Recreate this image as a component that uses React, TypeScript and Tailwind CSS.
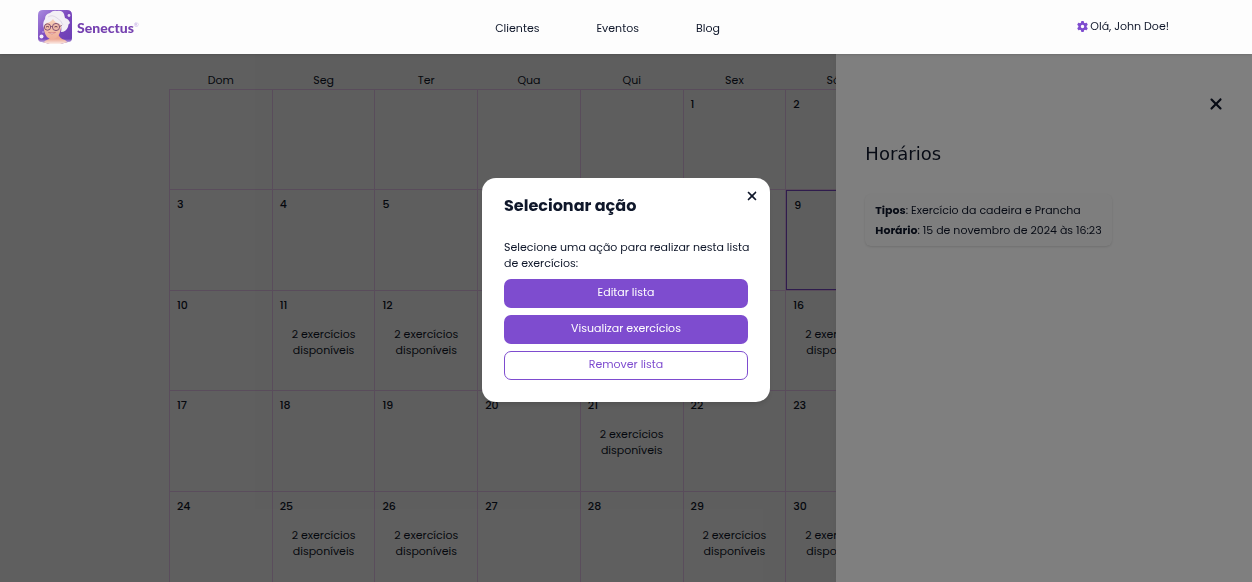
import React from "react";
import { FaGear, FaXmark } from "react-icons/fa6";

const weekdays = ["Dom", "Seg", "Ter", "Qua", "Qui", "Sex", "Sáb"];
const busyDays = [11, 12, 16, 21, 25, 26, 29, 30];
const today = 9;
const firstWeekday = 5;
const weeks = Array.from({ length: 5 }, (_, week) =>
  Array.from({ length: 7 }, (_, day) => week * 7 + day - firstWeekday + 1),
);

function Logo() {
  return (
    <a href="#inicio" aria-label="Senectus" className="flex items-center gap-1">
      <svg viewBox="0 0 34 34" className="size-[34px]" aria-hidden="true">
        <defs>
          <linearGradient id="tile" x1="0" y1="0" x2="1" y2="1">
            <stop offset="0" stopColor="#a98be0" />
            <stop offset="0.5" stopColor="#7a48bd" />
            <stop offset="1" stopColor="#6a3db4" />
          </linearGradient>
          <linearGradient id="skin" x1="0" y1="0" x2="0" y2="1">
            <stop offset="0" stopColor="#f8d3bd" />
            <stop offset="1" stopColor="#efae98" />
          </linearGradient>
          <linearGradient id="fade" x1="0" y1="0" x2="0" y2="1">
            <stop offset="0.85" stopColor="#fff" stopOpacity="0" />
            <stop offset="1" stopColor="#fff" stopOpacity="0.8" />
          </linearGradient>
          <clipPath id="tileClip">
            <path d="M5 0H29Q34 0 34 5V28Q34 32 30 32L26 33Q17 36 8 33L4 32Q0 32 0 28V5Q0 0 5 0Z" />
          </clipPath>
        </defs>
        <g clipPath="url(#tileClip)">
          <rect width="34" height="34" fill="url(#tile)" />
          <path d="M4 34Q7 30 11 29L20 24Q22 29 27 30Q29 31 30 34Z" fill="#eda893" />
          <path d="M6 14Q8 7 16 8Q24 9 23 18Q22 25 18 28Q13 31 9 27Q5 22 6 14Z" fill="url(#skin)" />
          <path d="M6 18Q4 13 7 9Q7 4 12 3Q15 0 19 1Q24 0 26 4L27 8Q31 9 32 13Q30 14 30 17Q28 22 23 22Q24 17 22 14Q17 13 15 9Q12 13 8 13Q7 15 6 18Z" fill="#f2eff5" />
          <path d="M10 7Q14 4 19 8Q23 10 25 15" fill="none" stroke="#d9d0df" strokeWidth="0.8" />
          <circle cx="9.500" cy="17" r="3.200" fill="#efb9a8" stroke="#7a4a70" strokeWidth="0.9" />
          <circle cx="18" cy="17" r="3.600" fill="#efb9a8" stroke="#7a4a70" strokeWidth="0.9" />
          <path d="M12.700 16.500H14.400M21.600 16.500L24 15.500" stroke="#7a4a70" strokeWidth="0.8" />
          <path d="M8 17Q9.500 16 11 17M16.500 17Q18 16 19.500 17" fill="none" stroke="#5a3046" strokeWidth="0.9" />
          <path d="M10.500 22.500Q14 25.500 17.500 22.500Q14 23 10.500 22.500Z" fill="#fff" stroke="#c9676a" strokeWidth="0.6" />
          <rect width="34" height="34" fill="url(#fade)" />
        </g>
        <circle cx="3.500" cy="26.500" r="2" fill="#f5effc" />
        <circle cx="31" cy="5.500" r="1.400" fill="#e3d7f5" />
        <circle cx="5" cy="22" r="0.800" fill="#cbb4ec" />
      </svg>
      <span className="flex items-start pl-px pt-[2px] font-[Lato,sans-serif] text-[14px] leading-5 font-black text-[#7540b0]">
        Senectus
        <span className="pt-1 text-[6px] leading-none font-normal text-[#c3a9e6]">®</span>
      </span>
    </a>
  );
}

function Calendar() {
  return (
    <table className="h-[523px] w-[720px] table-fixed border-collapse">
      <thead>
        <tr>
          {weekdays.map((name) => (
            <th key={name} scope="col" className="h-5 p-0 pb-px align-bottom font-normal">
              {name}
            </th>
          ))}
        </tr>
      </thead>
      <tbody>
        {weeks.map((week, row) => (
          <tr key={row} className="h-[100px]">
            {week.map((day, column) => (
              <td
                key={column}
                className={
                  day === today
                    ? "border border-[#efccf5] p-0 align-top outline-1 -outline-offset-1 outline-[#7e4ccf]"
                    : "border border-[#efccf5] p-0 align-top"
                }
              >
                {day > 0 && (
                  <div className={day === today ? "px-2 pt-[7px]" : "px-[7px] pt-[6px]"}>
                    <p className="font-medium">{day}</p>
                    {busyDays.includes(day) && (
                      <p className="pt-[13px] text-center">2 exercícios disponíveis</p>
                    )}
                  </div>
                )}
              </td>
            ))}
          </tr>
        ))}
      </tbody>
    </table>
  );
}

export default function App() {
  return (
    <div className="h-screen overflow-hidden bg-[#fdfdfd] font-[Poppins,Inter,sans-serif] text-[11px] leading-4 text-[#0f172a]">
      <header className="relative z-30 grid h-[54px] grid-cols-[1fr_auto_1fr] items-center bg-[#fdfdfd] pr-[83px] pl-[38px] shadow-sm">
        <Logo />
        <nav className="flex gap-[57px] pt-px pl-2">
          <a href="#clientes">Clientes</a>
          <a href="#eventos">Eventos</a>
          <a href="#blog">Blog</a>
        </nav>
        <a href="#conta" className="flex items-center gap-[2px] justify-self-end pb-[2px]">
          <FaGear className="size-[11px] text-[#7e4ccf]" aria-hidden="true" />
          Olá, John Doe!
        </a>
      </header>

      <main className="pt-[15px] pl-[13.5%]">
        <Calendar />
      </main>

      <div className="fixed inset-0 bg-black/25" />

      <aside className="fixed inset-y-0 right-0 z-10 w-[33.2%] bg-white pt-[95px] pr-[27px] pl-[29px] shadow-lg">
        <div className="flex justify-end">
          <button type="button" aria-label="Fechar horários">
            <FaXmark className="size-[18px]" />
          </button>
        </div>
        <h2 className="pt-[27px] font-['DejaVu_Sans',sans-serif] text-[18px] leading-7">Horários</h2>
        <div className="mt-[26px] flex w-fit flex-col gap-1 rounded-md bg-[#fdfdfd] px-[10px] py-2 shadow-sm">
          <p>
            <strong>Tipos</strong>: Exercício da cadeira e Prancha
          </p>
          <p>
            <strong>Horário</strong>: 15 de novembro de 2024 às 16:23
          </p>
        </div>
      </aside>

      <div className="fixed inset-0 z-20 flex items-center justify-center bg-black/50 pb-[2px]">
        <section
          role="dialog"
          aria-modal="true"
          aria-labelledby="action-title"
          className="relative w-[288px] rounded-[14px] bg-white px-[22px] pt-[18px] pb-[22px] shadow-md"
        >
          <button type="button" aria-label="Fechar" className="absolute top-[11px] right-[11px]">
            <FaXmark className="size-[14px]" />
          </button>
          <h2 id="action-title" className="text-[16px] leading-5 font-bold">
            Selecionar ação
          </h2>
          <p className="-mr-2 pt-[23px]">Selecione uma ação para realizar nesta lista de exercícios:</p>
          <div className="flex flex-col gap-[7px] pt-2">
            <button type="button" className="h-[29px] rounded-[7px] bg-[#7e4ccf] pb-[3px] text-white">
              Editar lista
            </button>
            <button type="button" className="h-[29px] rounded-[7px] bg-[#7e4ccf] pb-[3px] text-white">
              Visualizar exercícios
            </button>
            <button type="button" className="h-[29px] rounded-[7px] border border-[#7e4ccf] pb-[3px] text-[#7e4ccf]">
              Remover lista
            </button>
          </div>
        </section>
      </div>
    </div>
  );
}
